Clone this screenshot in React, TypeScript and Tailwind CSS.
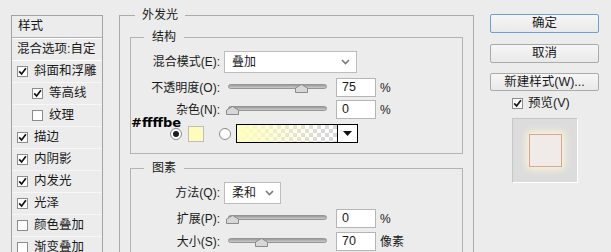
import React from 'react';

const Check = ({ on }: { on: boolean }) => (
  <span className="w-[11px] h-[11px] bg-white border border-[#8c8c8c] flex items-center justify-center shrink-0">
    {on && (
      <svg width="9" height="9" viewBox="0 0 9 9">
        <path d="M1.2 4.4 L3.6 7 L7.9 1.3" fill="none" stroke="#111" strokeWidth="1.7" />
      </svg>
    )}
  </span>
);

const Radio = ({ on }: { on: boolean }) => (
  <span className="w-[12px] h-[12px] rounded-full bg-white border border-[#8a8a8a] flex items-center justify-center shrink-0">
    {on && <span className="w-[6px] h-[6px] rounded-full bg-[#1e1e1e]" />}
  </span>
);

const Chevron = () => (
  <svg width="9" height="6" viewBox="0 0 9 6">
    <path d="M1 1 L4.5 4.5 L8 1" fill="none" stroke="#7a7a7a" strokeWidth="1.6" />
  </svg>
);

const Slider = ({ thumb }: { thumb: number }) => (
  <div className="relative w-[104px] h-[19px] shrink-0">
    <div className="absolute left-[4px] top-[6px] w-[99px] h-[5px] rounded-full bg-gradient-to-b from-[#9a9a9a] to-[#cdcdcd] border border-[#959595]" />
    <svg className="absolute top-[6px]" style={{ left: thumb }} width="13" height="9" viewBox="0 0 13 9">
      <path d="M0.5 4 L6.5 0.5 L12.5 4 L12.5 8.5 L0.5 8.5 Z" fill="#d7d7d7" stroke="#8a8a8a" />
    </svg>
  </div>
);

const Field = ({ value }: { value: string }) => (
  <div className="w-[40px] h-[19px] bg-white border border-[#b5b5b5] flex items-center pl-[5px] text-[12.5px] shrink-0">
    {value}
  </div>
);

const SliderRow = ({ label, thumb, value, unit, cls }: { label: string; thumb: number; value: string; unit: string; cls: string }) => (
  <div className={`relative flex items-center ${cls}`}>
    <span className="w-[89px] text-right">{label}</span>
    <span className="ml-[4px]"><Slider thumb={thumb} /></span>
    <span className="ml-[8px]"><Field value={value} /></span>
    <span className="ml-[4px]">{unit}</span>
  </div>
);

const rows = [
  { t: '斜面和浮雕', on: true, indent: false },
  { t: '等高线', on: true, indent: true },
  { t: '纹理', on: false, indent: true },
  { t: '描边', on: true, indent: false },
  { t: '内阴影', on: true, indent: false },
  { t: '内发光', on: true, indent: false },
  { t: '光泽', on: true, indent: false },
  { t: '颜色叠加', on: false, indent: false },
  { t: '渐变叠加', on: false, indent: false },
];

export default function App() {
  return (
    <div className="w-[611px] h-[252px] overflow-hidden bg-[#ececec] flex items-start text-[#1a1a1a] font-['Liberation_Sans','Noto_Sans_CJK_SC',sans-serif]">
      {/* styles list */}
      <div className="ml-[11px] mt-[15px] w-[92px] h-[245px] border border-[#a3a3a3] text-[12.5px] shrink-0">
        <div className="h-[22px] pl-[6px] flex items-center border-b border-[#b0b0b0]">样式</div>
        <div className="h-[23px] pl-[5px] flex items-center border-t border-white border-b border-[#b0b0b0]">混合选项:自定</div>
        {rows.map((r) => (
          <div
            key={r.t}
            className={`h-[22px] flex items-center gap-[6px] border-b border-[#f7f7f7] ${r.indent ? 'pl-[20px]' : 'pl-[5px]'}`}
          >
            <Check on={r.on} />
            <span>{r.t}</span>
          </div>
        ))}
      </div>

      {/* outer glow */}
      <fieldset className="ml-[16px] mt-[7px] w-[355px] h-[260px] border border-[#ababab] text-[12px] shrink-0">
        <legend className="ml-[15px] px-[7px] leading-[16px]">外发光</legend>

        <fieldset className="mx-[10px] mt-[6px] border border-[#b3b3b3] pt-[6px] pb-[10px]">
          <legend className="ml-[13px] px-[8px] leading-[16px]">结构</legend>
          <div className="flex items-center h-[22px]">
            <span className="w-[89px] text-right">混合模式(E):</span>
            <div className="ml-[4px] w-[133px] h-[22px] bg-white border border-[#bdbdbd] flex items-center pl-[7px] pr-[6px]">
              <span className="flex-1">叠加</span>
              <Chevron />
            </div>
          </div>
          <SliderRow label="不透明度(O):" thumb={71} value="75" unit="%" cls="mt-[5px]" />
          <div className="relative">
            <SliderRow label="杂色(N):" thumb={2} value="0" unit="%" cls="mt-[3px]" />
            <span className="absolute left-[0px] top-[16px] leading-[13px] text-[13px] font-bold text-black font-['DejaVu_Sans',sans-serif]">
              #ffffbe
            </span>
          </div>
          <div className="mt-[5px] flex items-center h-[19px] pl-[39px]">
            <Radio on />
            <span className="ml-[6px] w-[16px] h-[16px] bg-[#fffbbd] border border-[#bdbdbd]" />
            <span className="ml-[15px]"><Radio on={false} /></span>
            <div className="ml-[5px] w-[122px] h-[19px] border border-black flex bg-white">
              <svg className="flex-1 h-full" viewBox="0 0 100 17" preserveAspectRatio="none">
                <defs>
                  <pattern id="chk" width="8" height="8" patternUnits="userSpaceOnUse">
                    <rect width="8" height="8" fill="#ffffff" />
                    <rect width="4" height="4" fill="#d9d9d9" />
                    <rect x="4" y="4" width="4" height="4" fill="#d9d9d9" />
                  </pattern>
                  <linearGradient id="fade" x1="0" x2="1" y1="0" y2="0">
                    <stop offset="0" stopColor="#ffffbe" stopOpacity="1" />
                    <stop offset="0.85" stopColor="#ffffbe" stopOpacity="0" />
                  </linearGradient>
                </defs>
                <rect width="100" height="17" fill="url(#chk)" />
                <rect width="100" height="17" fill="url(#fade)" />
              </svg>
              <div className="w-[20px] border-l border-black bg-white flex items-center justify-center">
                <svg width="9" height="5" viewBox="0 0 9 5">
                  <path d="M0 0 L9 0 L4.5 5 Z" fill="#111" />
                </svg>
              </div>
            </div>
          </div>
        </fieldset>

        <fieldset className="mx-[10px] mt-[6px] border border-[#b3b3b3] pt-[6px] pb-[10px]">
          <legend className="ml-[13px] px-[8px] leading-[16px]">图素</legend>
          <div className="flex items-center h-[22px]">
            <span className="w-[89px] text-right">方法(Q):</span>
            <div className="ml-[4px] w-[57px] h-[22px] bg-white border border-[#bdbdbd] flex items-center pl-[7px] pr-[6px]">
              <span className="flex-1">柔和</span>
              <Chevron />
            </div>
          </div>
          <SliderRow label="扩展(P):" thumb={2} value="0" unit="%" cls="mt-[5px]" />
          <SliderRow label="大小(S):" thumb={31} value="70" unit="像素" cls="mt-[4px]" />
        </fieldset>
      </fieldset>

      {/* buttons */}
      <div className="ml-[16px] w-[109px] flex flex-col text-[12.5px] shrink-0">
        <div className="mt-[14px] h-[19px] rounded-[2px] border border-[#6c9fd6] bg-gradient-to-b from-[#f6f6f6] to-[#e9e9e9] flex items-center justify-center">确定</div>
        <div className="mt-[11px] h-[19px] rounded-[2px] border border-[#aaaaaa] bg-gradient-to-b from-[#f6f6f6] to-[#e9e9e9] flex items-center justify-center">取消</div>
        <div className="mt-[10px] h-[18px] rounded-[2px] border border-[#aaaaaa] bg-gradient-to-b from-[#f6f6f6] to-[#e9e9e9] flex items-center justify-center">新建样式(W)...</div>
        <div className="mt-[5px] h-[14px] ml-[22px] flex items-center gap-[5px]">
          <Check on />
          <span>预览(V)</span>
        </div>
        <div className="mt-[8px] ml-[22px] w-[66px] h-[65px] border border-[#c6c6c6] border-b-white border-r-white bg-[#dcdcdc] flex items-center justify-center">
          <div className="w-[33px] h-[33px] bg-[#f0ebe9] border border-[#d8a58f] shadow-[0_0_7px_2px_#fff8d6]" />
        </div>
      </div>
    </div>
  );
}
